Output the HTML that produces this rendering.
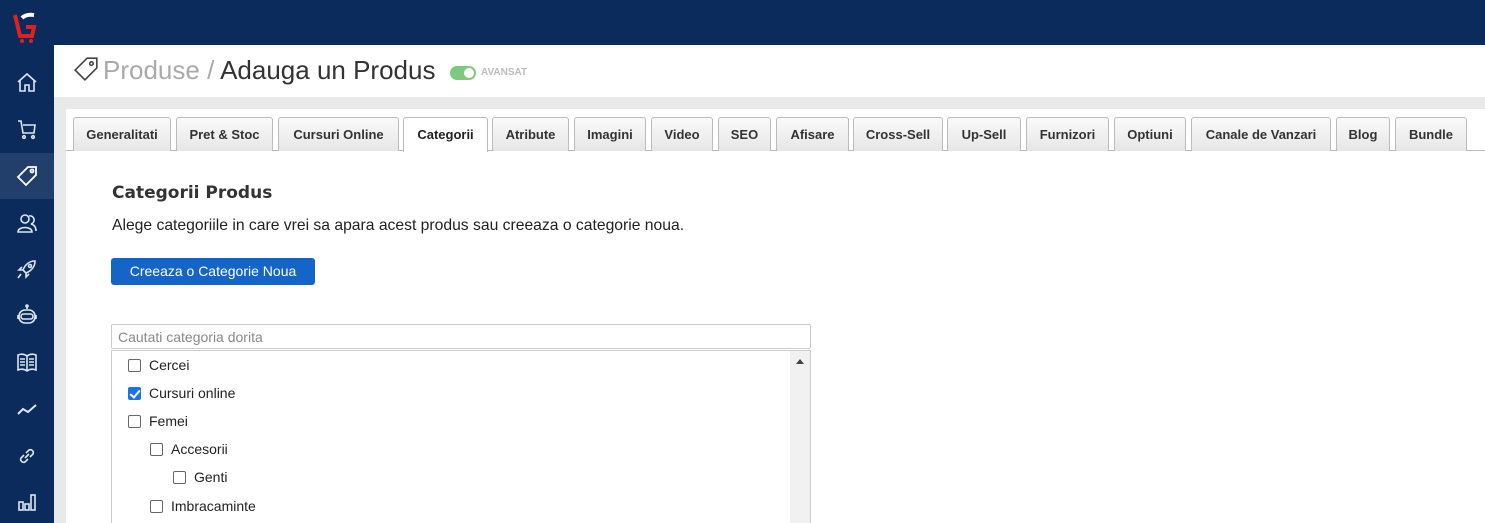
<!DOCTYPE html>
<html style="overflow:hidden;height:523px"><head><meta charset="utf-8"><style>
*{margin:0;padding:0;box-sizing:border-box}
body{width:1485px;height:523px;overflow:hidden;background:#e9e9e9;font-family:"Liberation Sans",sans-serif;position:relative}
.top{position:absolute;left:0;top:0;width:1485px;height:45px;background:#0a2b5c}
.side{position:absolute;left:0;top:0;width:54px;height:523px;background:#0a2b5c}
.act{position:absolute;left:0;top:153px;width:54px;height:46px;background:#223f6c}
.ic{position:absolute;left:15px;width:24px;height:24px}
.head{position:absolute;left:54px;top:45px;width:1431px;height:52px;background:#fff}
.title{position:absolute;left:103px;top:55px;font-size:26px;color:#333;white-space:nowrap}
.title .g{color:#aaa}
.tog{position:absolute;left:450px;top:66px;width:26px;height:14px;border-radius:7px;background:#7fc97f}
.tog:after{content:"";position:absolute;right:2px;top:2px;width:10px;height:10px;border-radius:5px;background:#fff}
.av{position:absolute;left:481px;top:67px;font-size:10px;font-weight:bold;color:#bbb}
.panel{position:absolute;left:66px;top:109px;width:1419px;height:414px;background:#fff}
.tabline{position:absolute;left:66px;top:150px;width:1419px;height:1px;background:#bbb}
.tab{position:absolute;top:117px;height:34px;border:1px solid #bbb;border-bottom:none;border-radius:3px 3px 0 0;background:linear-gradient(#fafafa,#e6e6e6);font-size:13px;font-weight:bold;color:#333;text-align:center;line-height:33px}
.tab.a{background:#fff;height:35px;color:#222}
h2{position:absolute;left:112px;top:183px;font-weight:bold;color:#333;font-family:"DejaVu Sans","Liberation Sans",sans-serif;font-size:17px}
.desc{position:absolute;left:112px;top:217px;font-size:15.7px;color:#222;white-space:nowrap}
.btn{position:absolute;left:111px;top:258px;width:204px;height:27px;background:#1565c8;border-radius:3px;color:#fff;font-size:14px;text-align:center;line-height:27px}
.inp{position:absolute;left:111px;top:324px;width:700px;height:25px;border:1px solid #ccc;border-radius:2px;font-size:14px;color:#888;padding-left:6px;line-height:24px}
.list{position:absolute;left:111px;top:350px;width:700px;height:173px;border:1px solid #ccc;border-bottom:none;overflow:hidden}
.sb{position:absolute;right:0;top:0;width:20px;height:173px;background:#f1f1f1}
.sb:after{content:"";position:absolute;left:6px;top:8px;border:4px solid transparent;border-bottom:5px solid #444;border-top:none}
.it{position:absolute;font-size:14px;color:#222;white-space:nowrap}
.cb{display:inline-block;width:13px;height:13px;border:1px solid #666;border-radius:2px;vertical-align:-2px;margin-right:8px;background:#fff}
.cb.c{background:#1a73e8;border-color:#1a73e8;position:relative}
.cb.c:after{content:"";position:absolute;left:3px;top:0px;width:4px;height:8px;border:solid #fff;border-width:0 2px 2px 0;transform:rotate(40deg)}
</style></head><body>
<div class="top"></div>
<div class="side"></div>
<div class="act"></div>
<svg style="position:absolute;left:12px;top:10px" width="28" height="34" viewBox="0 0 28 34"><path d="M3 5 L8 26 L20 26 L22 17 L14 17" fill="none" stroke="#e02020" stroke-width="4"/><path d="M10 8 Q14 4 22 5" fill="none" stroke="#fff" stroke-width="4"/><circle cx="10" cy="31" r="2" fill="#e02020"/><circle cx="19" cy="31" r="2" fill="#e02020"/></svg>
<svg class="ic" style="top:71px" viewBox="0 0 24 24" fill="none" stroke="#dde6f2" stroke-width="1.6"><path d="M3 11 L12 3 L21 11 M5 9 V20 H10 V14 H14 V20 H19 V9"/></svg>
<svg class="ic" style="top:117px" viewBox="0 0 24 24" fill="none" stroke="#dde6f2" stroke-width="1.6"><path d="M3 4 H6 L8 16 H19 L20 8 H8"/><circle cx="9" cy="20" r="1.3"/><circle cx="18" cy="20" r="1.3"/></svg>
<svg class="ic" style="top:164px" viewBox="0 0 24 24" fill="none" stroke="#fff" stroke-width="1.8"><path d="M13 3 H21 V11 L11 21 L3 13 Z"/><circle cx="17" cy="7" r="1.5"/></svg>
<svg class="ic" style="top:211px" viewBox="0 0 24 24" fill="none" stroke="#dde6f2" stroke-width="1.6"><circle cx="10" cy="8" r="4"/><path d="M3 21 C3 15 17 15 17 21 Z M14 5 A4 4 0 1 1 16 13 C20 14 21 17 21 20"/></svg>
<svg class="ic" style="top:257px" viewBox="0 0 24 24" fill="none" stroke="#dde6f2" stroke-width="1.6"><path d="M20 4 C14 4 10 8 8 13 L11 16 C16 14 20 10 20 4 Z M8 13 L4 13 L7 10 M11 16 V20 L14 17 M6 17 L3 21"/><circle cx="15" cy="9" r="1.5"/></svg>
<svg class="ic" style="top:303px" viewBox="0 0 24 24" fill="none" stroke="#dde6f2" stroke-width="1.6"><circle cx="12" cy="3" r="1"/><path d="M12 4 V6"/><rect x="4" y="7" width="16" height="13" rx="6"/><rect x="6" y="11" width="12" height="5" rx="2.5"/><path d="M3 12 V16 M21 12 V16"/></svg>
<svg class="ic" style="top:350px" viewBox="0 0 24 24" fill="none" stroke="#dde6f2" stroke-width="1.6"><path d="M3 5 Q8 3 12 6 Q16 3 21 5 V20 Q16 18 12 21 Q8 18 3 20 Z M12 6 V21 M5 9 H10 M5 12 H10 M5 15 H10 M14 9 H19 M14 12 H19 M14 15 H19"/></svg>
<svg class="ic" style="top:397px" viewBox="0 0 24 24" fill="none" stroke="#dde6f2" stroke-width="2"><path d="M3 17 L8 12 L13 15 L21 8"/></svg>
<svg class="ic" style="top:444px" viewBox="0 0 24 24" fill="none" stroke="#dde6f2" stroke-width="1.6"><path d="M10 14 L14 10 M9 11 L6 14 A3 3 0 0 0 10 18 L13 15 M11 9 L14 6 A3 3 0 0 1 18 10 L15 13"/></svg>
<svg class="ic" style="top:490px" viewBox="0 0 24 24" fill="none" stroke="#dde6f2" stroke-width="1.6"><rect x="4" y="12" width="4" height="8"/><rect x="10" y="14" width="4" height="6"/><rect x="16" y="5" width="4" height="15"/></svg>
<div class="head"></div>
<svg style="position:absolute;left:73px;top:56px" width="26" height="26" viewBox="0 0 24 24" fill="none" stroke="#444" stroke-width="1.5"><path d="M13 2 H22 V11 L11 22 L2 13 Z"/><circle cx="17" cy="7" r="1.6"/></svg>
<div class="title"><span class="g">Produse /</span> Adauga un Produs</div>
<div class="tog"></div><div class="av">AVANSAT</div>
<div class="panel"></div>
<div class="tabline"></div>
<div class="tab" style="left:73px;width:98px">Generalitati</div>
<div class="tab" style="left:176px;width:97px">Pret &amp; Stoc</div>
<div class="tab" style="left:278px;width:121px">Cursuri Online</div>
<div class="tab a" style="left:403px;width:85px">Categorii</div>
<div class="tab" style="left:492px;width:77px">Atribute</div>
<div class="tab" style="left:574px;width:72px">Imagini</div>
<div class="tab" style="left:651px;width:62px">Video</div>
<div class="tab" style="left:718px;width:53px">SEO</div>
<div class="tab" style="left:776px;width:73px">Afisare</div>
<div class="tab" style="left:853px;width:90px">Cross-Sell</div>
<div class="tab" style="left:947px;width:74px">Up-Sell</div>
<div class="tab" style="left:1026px;width:83px">Furnizori</div>
<div class="tab" style="left:1114px;width:72px">Optiuni</div>
<div class="tab" style="left:1191px;width:140px">Canale de Vanzari</div>
<div class="tab" style="left:1336px;width:54px">Blog</div>
<div class="tab" style="left:1395px;width:72px">Bundle</div>
<h2>Categorii Produs</h2>
<div class="desc">Alege categoriile in care vrei sa apara acest produs sau creeaza o categorie noua.</div>
<div class="btn">Creeaza o Categorie Noua</div>
<div class="inp">Cautati categoria dorita</div>
<div class="list"><div class="sb"></div></div>
<div class="it" style="left:128px;top:357px"><span class="cb"></span>Cercei</div>
<div class="it" style="left:128px;top:385px"><span class="cb c"></span>Cursuri online</div>
<div class="it" style="left:128px;top:413px"><span class="cb"></span>Femei</div>
<div class="it" style="left:150px;top:441px"><span class="cb"></span>Accesorii</div>
<div class="it" style="left:173px;top:469px"><span class="cb"></span>Genti</div>
<div class="it" style="left:150px;top:498px"><span class="cb"></span>Imbracaminte</div>
</body></html>
